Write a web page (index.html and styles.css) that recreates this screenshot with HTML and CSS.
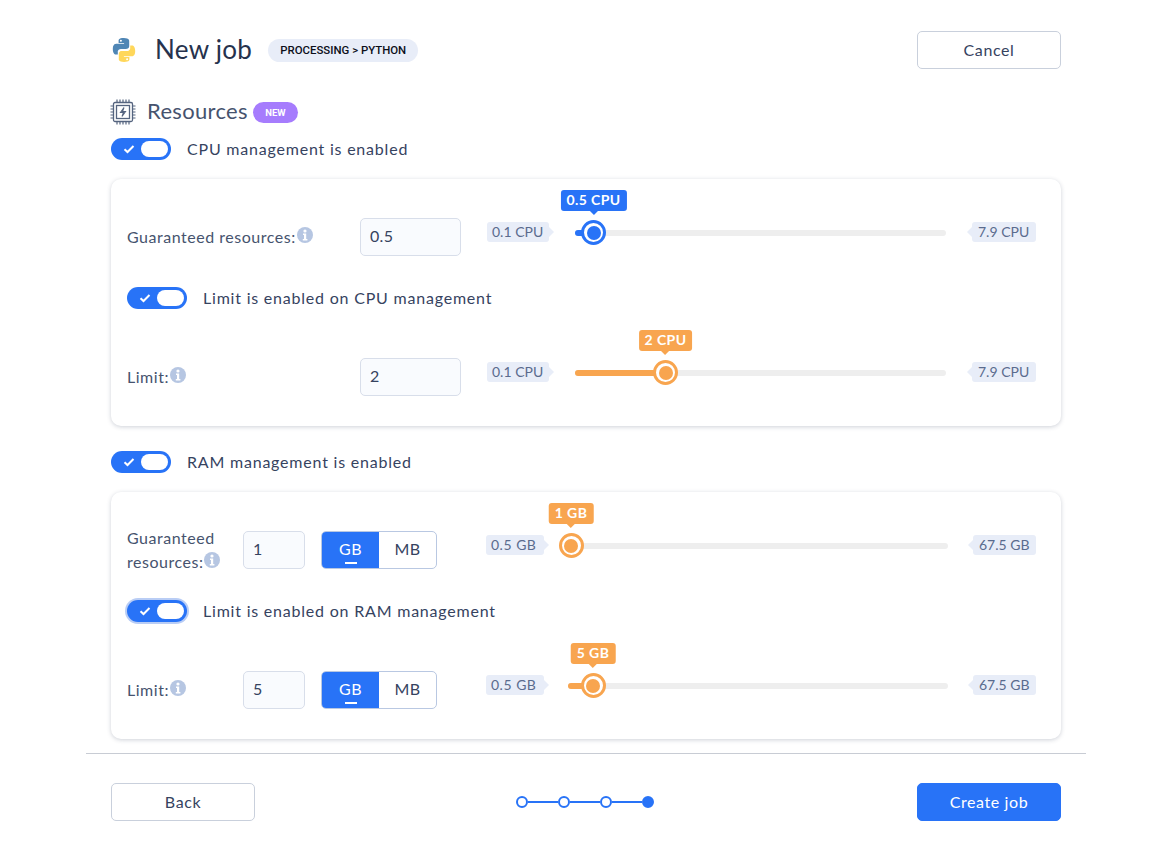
FILE: index.html
```html
<!DOCTYPE html>
<html lang="en">
<head>
<meta charset="utf-8">
<title>New job</title>
<link rel="stylesheet" href="styles.css">
</head>
<body>
<svg class="defs" width="0" height="0" aria-hidden="true">
  <symbol id="check" viewBox="0 0 12 10"><path d="M1.5 5.2 4.5 8 10.5 2" fill="none" stroke="#fff" stroke-width="2"/></symbol>
  <symbol id="info" viewBox="0 0 16 16"><circle cx="8" cy="8" r="8" fill="#b6c6e2"/><circle cx="8" cy="4" r="1.6" fill="#fff"/><path d="M6 6.6h3.2v5.4H10.4v1.4H5.8V12h1.2V8H6z" fill="#fff"/></symbol>
</svg>
<div class="page">
  <main class="content">
    <header class="head">
      <svg class="py" viewBox="0 0 24 24">
        <path fill="#4f86b5" fill-rule="evenodd" d="M11.9 0C6.3 0 6.6 2.4 6.6 2.4v2.6h5.5v.8H4.4S.8 5.4.8 11.1s3.1 5.5 3.1 5.5h1.9V14s-.1-3.1 3.1-3.1h5.3s3 0 3-2.9V3S17.700 0 11.900 0zM8.900 1.700a1 1 0 1 1 0 2 1 1 0 0 1 0-2z"/>
        <path fill="#ffd75a" fill-rule="evenodd" d="M12.100 24c5.600 0 5.300-2.400 5.300-2.400V19h-5.500v-.8h7.700s3.600.4 3.600-5.300-3.100-5.500-3.100-5.500h-1.900V10s.1 3.100-3.100 3.100H9.800s-3 0-3 2.900v5S6.300 24 12.100 24zm3-1.700a1 1 0 1 1 0-2 1 1 0 0 1 0 2z"/>
      </svg>
      <h1 class="title">New job</h1>
      <span class="crumb">PROCESSING &gt; PYTHON</span>
      <button class="btn btn-cancel">Cancel</button>
    </header>

    <section class="res-head">
      <svg class="chip" viewBox="0 0 26 26" fill="none" stroke="#55647f">
        <rect x="3.500" y="3.500" width="19" height="19" rx="1.500" stroke-width="1.300"/>
        <rect x="6.500" y="6.500" width="13" height="13" stroke-width="1.300"/>
        <path d="M7 .5v3M10 .5v3M13 .5v3M16 .5v3M19 .5v3M7 22.500v3M10 22.500v3M13 22.500v3M16 22.500v3M19 22.500v3M.5 7h3M.5 10h3M.5 13h3M.5 16h3M.5 19h3M22.500 7h3M22.500 10h3M22.500 13h3M22.500 16h3M22.500 19h3" stroke-width="1.200"/>
        <path d="M14 8.500 10.500 13.500H13.500L12 17.500 15.500 12.500H12.500Z" stroke-width="1.100"/>
      </svg>
      <h2 class="res-title">Resources</h2>
      <span class="new">NEW</span>
    </section>

    <div class="toggle-row top">
      <span class="toggle"><svg class="tick"><use href="#check"/></svg><i class="knob"></i></span>
      <span class="toggle-label">CPU management is enabled</span>
    </div>

    <section class="card">
      <div class="row">
        <div class="lab lab-wide"><span>Guaranteed resources:</span><svg class="info"><use href="#info"/></svg></div>
        <div class="field field-wide">0.5</div>
        <div class="slider blue">
          <span class="tag tag-l">0.1 CPU</span>
          <div class="track"><i class="fill" style="width:4.99%"></i><div class="thumb" style="left:4.99%"><span class="tip">0.5 CPU</span></div></div>
          <span class="tag tag-r">7.9 CPU</span>
        </div>
      </div>
      <div class="toggle-row inner">
        <span class="toggle"><svg class="tick"><use href="#check"/></svg><i class="knob"></i></span>
        <span class="toggle-label">Limit is enabled on CPU management</span>
      </div>
      <div class="row">
        <div class="lab lab-wide"><span>Limit:</span><svg class="info"><use href="#info"/></svg></div>
        <div class="field field-wide">2</div>
        <div class="slider orange">
          <span class="tag tag-l">0.1 CPU</span>
          <div class="track"><i class="fill" style="width:24.4%"></i><div class="thumb" style="left:24.4%"><span class="tip">2 CPU</span></div></div>
          <span class="tag tag-r">7.9 CPU</span>
        </div>
      </div>
    </section>

    <div class="toggle-row second">
      <span class="toggle"><svg class="tick"><use href="#check"/></svg><i class="knob"></i></span>
      <span class="toggle-label">RAM management is enabled</span>
    </div>

    <section class="card">
      <div class="row">
        <div class="lab lab-narrow"><span>Guaranteed resources:</span><svg class="info"><use href="#info"/></svg></div>
        <div class="field field-narrow">1</div>
        <div class="units"><span class="unit on">GB</span><span class="unit">MB</span></div>
        <div class="slider orange ram">
          <span class="tag tag-l">0.5 GB</span>
          <div class="track"><div class="thumb" style="left:0.79%"><span class="tip">1 GB</span></div></div>
          <span class="tag tag-r">67.5 GB</span>
        </div>
      </div>
      <div class="toggle-row inner">
        <span class="toggle focus"><svg class="tick"><use href="#check"/></svg><i class="knob"></i></span>
        <span class="toggle-label">Limit is enabled on RAM management</span>
      </div>
      <div class="row">
        <div class="lab lab-narrow"><span>Limit:</span><svg class="info"><use href="#info"/></svg></div>
        <div class="field field-narrow">5</div>
        <div class="units"><span class="unit on">GB</span><span class="unit">MB</span></div>
        <div class="slider orange ram">
          <span class="tag tag-l">0.5 GB</span>
          <div class="track"><i class="fill" style="width:6.58%"></i><div class="thumb" style="left:6.58%"><span class="tip">5 GB</span></div></div>
          <span class="tag tag-r">67.5 GB</span>
        </div>
      </div>
    </section>
  </main>

  <footer class="foot">
    <button class="btn">Back</button>
    <div class="steps">
      <i class="dot"></i><i class="line"></i><i class="dot"></i><i class="line"></i><i class="dot"></i><i class="line"></i><i class="dot cur"></i>
    </div>
    <button class="btn btn-primary">Create job</button>
  </footer>
</div>
</body>
</html>
```

FILE: styles.css
```css
* { box-sizing: border-box; }
html, body { margin: 0; padding: 0; background: #fff; }
body { font-family: "Lato", "Noto Sans", sans-serif; color: #36435f; font-size: 16px; height: 845px; overflow: hidden; }
.defs { position: absolute; }
.page { width: 1000px; margin-left: 86px; }
.content { padding: 31px 25px 14px; }

.head { display: flex; align-items: center; height: 38px; }
.py { width: 24px; height: 24px; margin-left: 1px; }
.title { margin: 0 0 0 19px; padding-bottom: 2px; font-size: 26px; font-weight: 400; color: #26324d; letter-spacing: .3px; line-height: 36px; }
.crumb { margin-left: 16px; height: 23px; width: 150px; border-radius: 12px; background: #e8edf8; color: #0c0f1a; font: 500 11.400px/23px "Roboto", sans-serif; text-align: center; }
.btn { width: 144px; height: 38px; border: 1px solid #c9d0dc; border-radius: 5px; background: #fff; color: #36435f; font-family: inherit; font-size: 16px; letter-spacing: .6px; padding: 0 0 2px; }
.btn-cancel { margin-left: auto; }
.btn-primary { background: #2873f7; border-color: #2873f7; color: #fff; }

.res-head { display: flex; align-items: center; height: 26px; margin-top: 30px; }
.chip { width: 26px; height: 26px; margin-left: -1px; }
.res-title { margin: 0 0 0 11px; padding-bottom: 3px; font-size: 22px; font-weight: 400; color: #46536e; letter-spacing: .33px; }
.new { margin-left: 5px; width: 45px; height: 21px; border-radius: 11px; background: #a67cfd; color: #fff; font: 700 9.500px/21px "Roboto", sans-serif; text-align: center; }

.toggle-row { display: flex; align-items: center; gap: 16px; height: 22px; }
.toggle-row.top { margin-top: 13px; }
.toggle-row.second { margin-top: 25px; }
.toggle-row.inner { margin-top: 31px; margin-bottom: 49px; }
.toggle { position: relative; display: block; flex: none; width: 60px; height: 22px; border-radius: 11px; background: #2873f7; }
.toggle.focus { box-shadow: 0 0 0 2px #b9cdf5; }
.tick { position: absolute; left: 12px; top: 6px; width: 12px; height: 10px; }
.knob { position: absolute; right: 3px; top: 3px; width: 27px; height: 16px; border-radius: 8px; background: #fff; }
.toggle-label { padding-bottom: 2px; letter-spacing: .79px; color: #36435f; }

.card { margin-top: 19px; height: 247px; padding: 39px 25px 0 16px; border-radius: 10px; background: #fff; box-shadow: 0 1px 4px rgba(60, 70, 100, .25); }
.row { display: flex; align-items: center; height: 38px; }
.lab { flex: none; line-height: 24px; color: #46536e; letter-spacing: .52px; }
.lab-wide { width: 233px; }
.lab-narrow { width: 116px; }
.info { display: inline-block; width: 16px; height: 16px; margin-left: 1px; vertical-align: 0; }
.field { flex: none; height: 38px; border: 1px solid #d8deea; border-radius: 5px; background: #f9fbfe; padding-left: 9px; line-height: 34px; color: #36435f; letter-spacing: .3px; }
.field-wide { width: 101px; margin-right: 26px; }
.field-narrow { width: 62px; margin-right: 16px; }
.units { flex: none; display: flex; width: 116px; height: 38px; margin-right: 49px; border: 1px solid #b9c8e2; border-radius: 5px; overflow: hidden; }
.unit { position: relative; flex: 1; text-align: center; line-height: 34px; color: #36435f; letter-spacing: .5px; }
.unit.on { background: #2873f7; color: #fff; }
.unit.on::after { content: ""; position: absolute; left: 23px; bottom: 4px; width: 12px; height: 2px; background: #fff; }

.slider { flex: 1; display: flex; align-items: center; height: 38px; padding-bottom: 8px; --c: #2873f7; }
.slider.orange { --c: #f8a54f; }
.tag { position: relative; flex: none; height: 20px; margin-bottom: 2px; padding: 0 5px; border-radius: 3px; background: #e8edf8; color: #5a6b8e; font-size: 14px; line-height: 20px; white-space: nowrap; }
.tag-l { width: 62px; margin-right: 26px; }
.tag-r { width: 64px; margin-left: 26px; padding-left: 6px; }
.ram .tag-l { width: 58px; margin-right: 24px; letter-spacing: .5px; }
.ram .tag-r { width: 63px; margin-left: 25px; }
.tag-l::after, .tag-r::after { content: ""; position: absolute; top: 5px; border: 5px solid transparent; }
.tag-l::after { left: 100%; border-left-color: #e8edf8; border-right-width: 0; }
.tag-r::after { right: 100%; border-right-color: #e8edf8; border-left-width: 0; }
.track { position: relative; flex: 1; height: 6px; border-radius: 3px; background: #eeeeee; }
.fill { position: absolute; left: 0; top: 0; height: 6px; border-radius: 3px; background: var(--c); }
.thumb { position: absolute; top: 50%; width: 25px; height: 25px; margin: -13px 0 0 -12.500px; border: 3px solid var(--c); border-radius: 50%; background: #fff; }
.thumb::before { content: ""; position: absolute; inset: 2.500px; border-radius: 50%; background: var(--c); }
.tip { position: absolute; left: 50%; bottom: 31px; transform: translateX(-50%); height: 21px; padding: 0 6px; border-radius: 3px; background: var(--c); color: #fff; font-size: 14px; font-weight: 700; line-height: 20px; white-space: nowrap; letter-spacing: .4px; }
.tip::after { content: ""; position: absolute; left: 50%; top: 100%; margin-left: -4px; border: 4px solid transparent; border-top-color: var(--c); border-bottom-width: 0; }

.foot { display: flex; align-items: center; justify-content: space-between; padding: 29px 25px 0; border-top: 1px solid #c8ccd4; }
.steps { display: flex; align-items: center; margin-right: 2px; }
.dot { display: block; width: 12px; height: 12px; border: 2px solid #2873f7; border-radius: 50%; background: #fff; }
.dot.cur { background: #2873f7; }
.line { display: block; width: 30px; height: 2px; background: #2873f7; }
```
